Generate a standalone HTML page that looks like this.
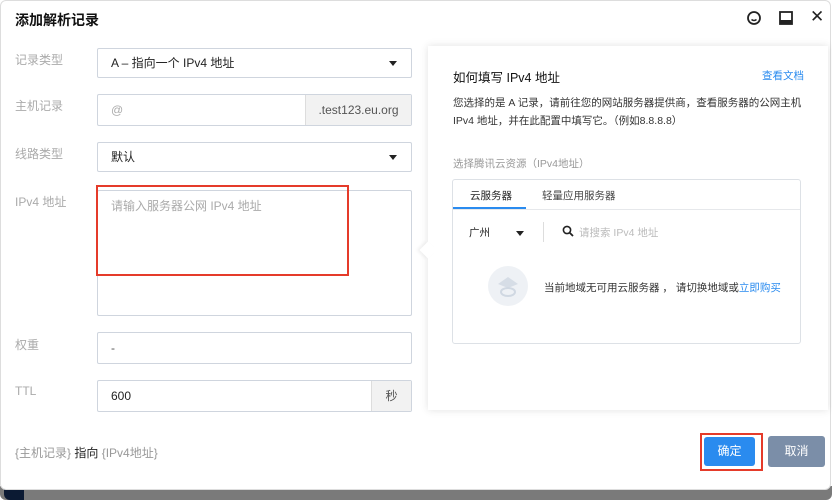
<!DOCTYPE html><html><head><meta charset="utf-8"><style>
*{box-sizing:border-box;margin:0;padding:0}
body{width:832px;height:504px;background:#fff;font-family:"Liberation Sans","Noto Sans CJK SC",sans-serif;position:relative;overflow:hidden;font-size:12px;color:#333}
.a{position:absolute}
.dlg{left:0;top:0;width:831px;height:490px;border:1px solid #ddd;border-radius:6px;background:#fff}
.lbl{color:#aaa;font-size:12px;left:15px}
.inp{border:1px solid #cfd5de;background:#fff;border-radius:2px;left:97px;width:315px;height:30px;font-size:12px;padding-left:13px;line-height:28px}
.tri{width:0;height:0;border-left:4px solid transparent;border-right:4px solid transparent;border-top:5px solid #222}
.red{border:2px solid #e53b2a}
</style></head><body>
<div class="a" style="left:0;top:486px;width:832px;height:14px;background:#7a7a7a;border-radius:0 0 6px 6px"></div>
<div class="a" style="left:4px;top:488px;width:20px;height:12px;background:#0b1a33;border-radius:0 0 0 6px"></div>
<div class="a dlg"></div>
<div class="a" style="left:15px;top:10px;font-size:14px;color:#111;font-weight:bold">添加解析记录</div>
<svg class="a" style="left:746px;top:10px" width="16" height="16" viewBox="0 0 16 16"><circle cx="8" cy="8" r="6" fill="none" stroke="#222" stroke-width="1.8"/><path d="M5.5 9.5q2.5 2 5 0" fill="none" stroke="#222" stroke-width="1.5"/></svg>
<svg class="a" style="left:778px;top:10px" width="16" height="16" viewBox="0 0 16 16"><rect x="2" y="2" width="12" height="12" fill="none" stroke="#222" stroke-width="1.8"/><rect x="2" y="10" width="12" height="4" fill="#222"/></svg>
<div class="a" style="left:810px;top:7px;font-size:17px;color:#222">✕</div>

<div class="a lbl" style="top:51px">记录类型</div>
<div class="a inp" style="top:48px;color:#222">A – 指向一个 IPv4 地址<div class="a tri" style="right:14px;top:12px"></div></div>
<div class="a lbl" style="top:97px">主机记录</div>
<div class="a inp" style="top:94px;height:32px;color:#aaa;line-height:30px">@<div class="a" style="right:0;top:0;width:106px;height:30px;background:#f2f2f2;border-left:1px solid #ddd;color:#555;text-align:center">.test123.eu.org</div></div>
<div class="a lbl" style="top:145px">线路类型</div>
<div class="a inp" style="top:142px;color:#222">默认<div class="a tri" style="right:14px;top:12px"></div></div>
<div class="a lbl" style="top:193px">IPv4 地址</div>
<div class="a inp" style="top:190px;height:126px;color:#aaa;line-height:30px">请输入服务器公网 IPv4 地址</div>
<div class="a red" style="left:96px;top:185px;width:253px;height:91px"></div>
<div class="a lbl" style="top:336px">权重</div>
<div class="a inp" style="top:332px;height:32px;line-height:30px;color:#555">-</div>
<div class="a lbl" style="top:384px">TTL</div>
<div class="a inp" style="top:380px;height:32px;line-height:30px;color:#222">600<div class="a" style="right:0;top:0;width:40px;height:30px;background:#f2f2f2;border-left:1px solid #ddd;color:#555;text-align:center">秒</div></div>

<div class="a" style="left:428px;top:46px;width:400px;height:364px;background:#fff;box-shadow:0 0 8px rgba(0,0,0,.12)"></div>
<div class="a" style="left:422px;top:244px;width:12px;height:12px;background:#fff;transform:rotate(45deg);box-shadow:-2px 2px 3px rgba(0,0,0,.06)"></div>
<div class="a" style="left:453px;top:67px;font-size:12.5px;color:#111">如何填写 IPv4 地址</div>
<div class="a" style="left:762px;top:68px;font-size:10.5px;color:#2a8bef">查看文档</div>
<div class="a" style="left:453px;top:94px;font-size:10.5px;color:#333;line-height:18px">您选择的是 A 记录，请前往您的网站服务器提供商，查看服务器的公网主机<br>IPv4 地址，并在此配置中填写它。（例如8.8.8.8）</div>
<div class="a" style="left:453px;top:156px;font-size:10.5px;color:#999">选择腾讯云资源（IPv4地址）</div>
<div class="a" style="left:452px;top:179px;width:349px;height:165px;border:1px solid #dde1e6;border-radius:3px"></div>
<div class="a" style="left:453px;top:209px;width:347px;height:1px;background:#e6e8eb"></div>
<div class="a" style="left:453px;top:207px;width:73px;height:2px;background:#2a8bef"></div>
<div class="a" style="left:470px;top:188px;font-size:10.5px;color:#222">云服务器</div>
<div class="a" style="left:542px;top:188px;font-size:10.5px;color:#444">轻量应用服务器</div>
<div class="a" style="left:469px;top:225px;font-size:10.5px;color:#222">广州</div>
<div class="a tri" style="left:516px;top:231px"></div>
<div class="a" style="left:543px;top:222px;width:1px;height:20px;background:#ddd"></div>
<svg class="a" style="left:562px;top:225px" width="12" height="12" viewBox="0 0 12 12"><circle cx="5" cy="5" r="3.6" fill="none" stroke="#222" stroke-width="1.6"/><path d="M7.7 7.7L11 11" stroke="#222" stroke-width="1.8"/></svg>
<div class="a" style="left:579px;top:225px;font-size:10.5px;color:#bbb">请搜索 IPv4 地址</div>
<div class="a" style="left:488px;top:266px;width:40px;height:40px;border-radius:50%;background:#eef1f5"></div>
<svg class="a" style="left:492px;top:270px" width="32" height="32" viewBox="0 0 32 32"><path d="M6 14l10-7 10 7-10 4z" fill="#d6dde6"/><ellipse cx="16" cy="22" rx="7" ry="4" fill="none" stroke="#d0d8e2" stroke-width="2"/></svg>
<div class="a" style="left:544px;top:280px;font-size:10.5px;color:#333">当前地域无可用云服务器 ， 请切换地域或<span style="color:#2a8bef">立即购买</span></div>

<div class="a" style="left:15px;top:444px;font-size:12px;color:#999">{主机记录} <span style="color:#222">指向</span> {IPv4地址}</div>
<div class="a" style="left:704px;top:437px;width:51px;height:29px;background:#2a8bef;border-radius:3px;color:#fff;text-align:center;line-height:29px">确定</div>
<div class="a red" style="left:700px;top:433px;width:63px;height:38px"></div>
<div class="a" style="left:768px;top:436px;width:57px;height:31px;background:#7b8ea8;border-radius:3px;color:#fff;text-align:center;line-height:31px">取消</div>
</body></html>
